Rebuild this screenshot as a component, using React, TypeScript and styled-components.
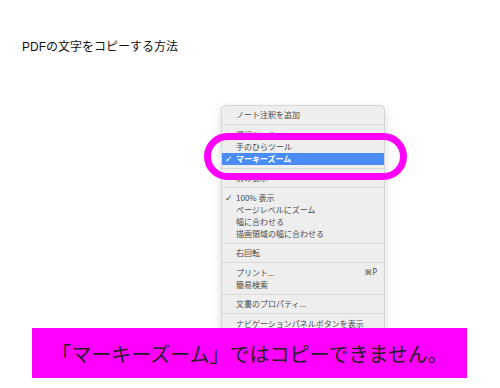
import styled, { createGlobalStyle } from "styled-components"

const GlobalStyle = createGlobalStyle`
    body {
        margin: 0;
        background: #ffffff;
        font-family: "Liberation Sans", "Noto Sans CJK JP", sans-serif;
    }
`

const Page = styled.div`
    position: relative;
    width: 500px;
    height: 388px;
    overflow: hidden;
    padding-top: 39px;
    box-sizing: border-box;
    background: #ffffff;
`
const Title = styled.h1`
    margin: 0;
    padding-left: 22px;
    font-size: 12px;
    line-height: 16px;
    font-weight: 400;
    color: #111;
    font-family: "Liberation Sans", "Noto Sans CJK JP", sans-serif;
`
const Menu = styled.div`
    width: 164px;
    margin: 50px 0 0 221px;
    padding: 3px 0 20px;
    box-sizing: border-box;
    background: #eeeeee;
    border: 1px solid #d6d6d6;
    border-radius: 5px;
    box-shadow: 0 3px 10px rgba(0, 0, 0, 0.16);
    font-family: "Noto Sans CJK JP", "Liberation Sans", sans-serif;
`
const Item = styled.div<{ $active?: boolean }>`
    display: flex;
    align-items: center;
    height: 12px;
    padding: 0 7px 0 3px;
    font-size: 8px;
    line-height: 12px;
    color: ${(p) => (p.$active ? "#ffffff" : "#4b4b4b")};
    background: ${(p) => (p.$active ? "#4a8cf6" : "transparent")};
    font-weight: ${(p) => (p.$active ? 700 : 400)};
`
const Check = styled.span`
    width: 11px;
    flex: none;
    font-family: "DejaVu Sans", sans-serif;
    font-size: 9px;
    font-weight: 700;
`
const Label = styled.span`
    flex: 1;
    white-space: nowrap;
`
const Shortcut = styled.span`
    font-family: "DejaVu Sans", sans-serif;
    font-size: 8px;
    color: #555;
`
const Separator = styled.div`
    height: 1px;
    margin: 3px 0 3.5px;
    background: #d9d9d9;
`
const Ring = styled.div`
    position: absolute;
    left: 204px;
    top: 133px;
    width: 203px;
    height: 47px;
    box-sizing: border-box;
    border: 7px solid #ff00ff;
    border-radius: 24px;
`
const Banner = styled.div`
    position: absolute;
    left: 32px;
    top: 328px;
    width: 435px;
    height: 50px;
    display: flex;
    align-items: center;
    justify-content: center;
    background: #ff00ff;
    color: #222;
    font-size: 20px;
    font-family: "Noto Sans CJK JP", sans-serif;
`

type Entry = { label?: string; check?: boolean; active?: boolean; shortcut?: string }

const entries: Entry[] = [
  { label: "ノート注釈を追加" },
  {},
  { label: "選択ツール" },
  { label: "手のひらツール" },
  { label: "マーキーズーム", check: true, active: true },
  {},
  { label: "前の表示" },
  {},
  { label: "100% 表示", check: true },
  { label: "ページレベルにズーム" },
  { label: "幅に合わせる" },
  { label: "描画領域の幅に合わせる" },
  {},
  { label: "右回転" },
  {},
  { label: "プリント...", shortcut: "⌘P" },
  { label: "簡易検索" },
  {},
  { label: "文書のプロパティ..." },
  {},
  { label: "ナビゲーションパネルボタンを表示" },
]

const App = () => {
  return (
    <Page>
      <GlobalStyle />
      <Title>PDFの文字をコピーする方法</Title>
      <Menu>
        {entries.map((e, i) =>
          e.label ? (
            <Item key={i} $active={e.active}>
              <Check>{e.check ? "✓" : ""}</Check>
              <Label>{e.label}</Label>
              {e.shortcut && <Shortcut>{e.shortcut}</Shortcut>}
            </Item>
          ) : (
            <Separator key={i} />
          )
        )}
      </Menu>
      <Ring />
      <Banner>「マーキーズーム」ではコピーできません。</Banner>
    </Page>
  )
}

export default App
